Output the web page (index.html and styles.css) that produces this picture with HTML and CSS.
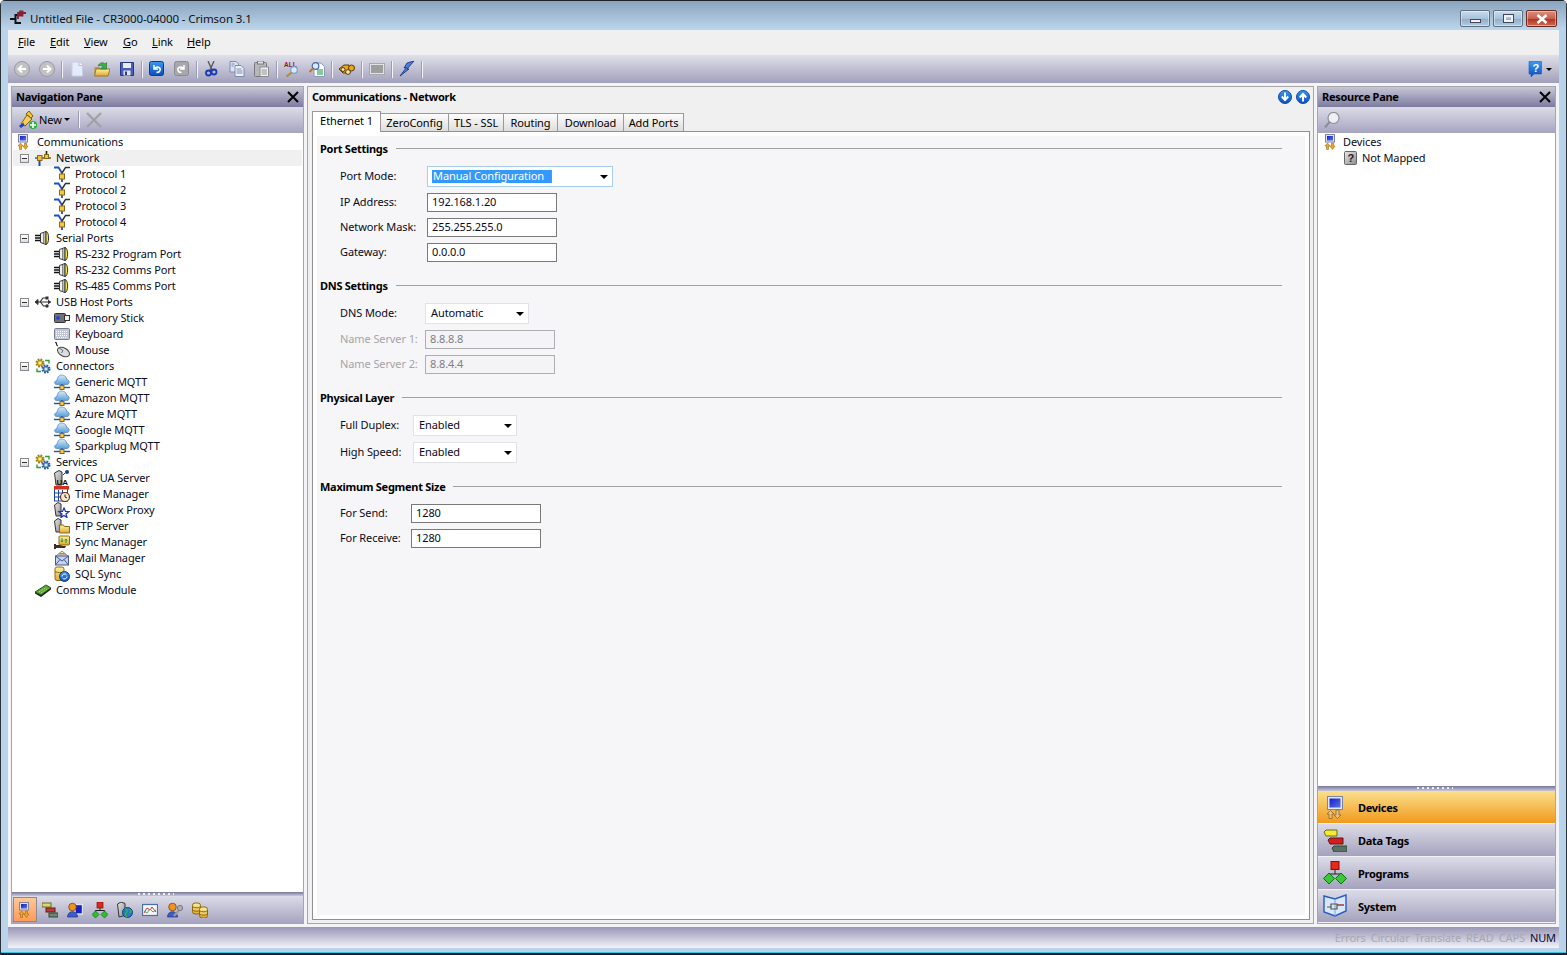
FILE: index.html
```html
<!DOCTYPE html>
<html lang="en">
<head>
<meta charset="utf-8">
<title>Untitled File - CR3000-04000 - Crimson 3.1</title>
<link rel="stylesheet" href="styles.css">
</head>
<body>
<svg class="sprite" xmlns="http://www.w3.org/2000/svg">
  <defs>
    <linearGradient id="gBlue" x1="0" y1="0" x2="0" y2="1"><stop offset="0" stop-color="#3a9af0"/><stop offset="1" stop-color="#0a4cc0"/></linearGradient>
    <linearGradient id="gGray" x1="0" y1="0" x2="1" y2="1"><stop offset="0" stop-color="#e8e8e8"/><stop offset="1" stop-color="#8c8c8c"/></linearGradient>
    <linearGradient id="gYel" x1="0" y1="0" x2="0" y2="1"><stop offset="0" stop-color="#fff0a0"/><stop offset="1" stop-color="#e0a830"/></linearGradient>
    <linearGradient id="gCloud" x1="0" y1="0" x2="0" y2="1"><stop offset="0" stop-color="#d8ecfa"/><stop offset="1" stop-color="#5aa0d8"/></linearGradient>
    <linearGradient id="gScreen" x1="0" y1="0" x2="1" y2="1"><stop offset="0" stop-color="#1420c8"/><stop offset="1" stop-color="#5a70e8"/></linearGradient>
  </defs>
  <symbol id="logo" viewBox="0 0 16 16"><path d="M0 9h5M11 5H5.500v8H11" fill="none" stroke="#111" stroke-width="2"/><path d="M8 9V3h2M10 1.500h2.500v4H10zM12.500 3H16" fill="#8c2030" stroke="#8c2030" stroke-width="1.800"/></symbol>
  <symbol id="comm" viewBox="0 0 16 16"><rect x="1.500" y=".5" width="9" height="7.500" fill="#dfe3f0" stroke="#7d84a0"/><rect x="3" y="2" width="6" height="4.500" fill="url(#gScreen)"/><path d="M3.500 9 1 12h1.500v3.500h2V12H6z" fill="#f2a81e" stroke="#8a5a10" stroke-width=".5"/><path d="M8.500 15.500 11 12H9.500V9h-2v3H6z" fill="#f2a81e" stroke="#8a5a10" stroke-width=".5"/></symbol>
  <symbol id="net" viewBox="0 0 16 16"><path d="M4.500 9v7" stroke="#1a50c0" stroke-width="2" fill="none"/><path d="M0 8h16" stroke="#333" stroke-width="1.200"/><path d="M11.500 1v6" stroke="#222" stroke-width="1.600"/><rect x="2.500" y="5.500" width="4.500" height="5" fill="#f0c040" stroke="#8a6a10"/><rect x="9.500" y="4.500" width="4" height="4" fill="#f0c040" stroke="#8a6a10"/></symbol>
  <symbol id="proto" viewBox="0 0 16 16"><path d="M0 1.500h4.500L8 7" fill="none" stroke="#1a50c0" stroke-width="1.800"/><path d="M16 1.500h-4.500L8 7" fill="none" stroke="#333" stroke-width="1.400"/><path d="M8 7v9" stroke="#1a50c0" stroke-width="1.800"/><rect x="5.500" y="8" width="5" height="5" fill="#f3c84a" stroke="#8a6a10"/></symbol>
  <symbol id="serial" viewBox="0 0 16 16"><path d="M0 5.500h6M0 8h6M0 10.500h6" stroke="#111" stroke-width="1.400"/><path d="M5.500 3.500 11 1.500v13l-5.500-2z" fill="#f0f0f0" stroke="#333"/><rect x="8" y="3" width="1.500" height="10" fill="#888"/><path d="M11 1.500c3.500.5 3.500 12.500 0 13z" fill="#f4ec20" stroke="#333"/></symbol>
  <symbol id="usb" viewBox="0 0 16 16"><path d="M0 8 3 5.500v5zM3 8h13" fill="#333" stroke="#333"/><path d="M5 8l3-4h3M5.500 8l3 4h2.500" fill="none" stroke="#333" stroke-width="1.200"/><rect x="10.500" y="2.500" width="3" height="3" fill="#333"/><circle cx="12" cy="12" r="1.700" fill="#333"/><path d="M13 5.500l3 2.500-3 2.500z" fill="#333"/></symbol>
  <symbol id="stick" viewBox="0 0 16 16"><rect x=".5" y="3.500" width="11" height="9" rx="1" fill="#6f7078" stroke="#333"/><circle cx="4" cy="8" r="1.800" fill="#1a40e0"/><rect x="10.500" y="5.500" width="5" height="5" fill="#eee" stroke="#333"/></symbol>
  <symbol id="kbd" viewBox="0 0 16 16"><rect x=".5" y="2.500" width="15" height="11" rx="1" fill="#c0c6d6" stroke="#7a7f90"/><path d="M2 5.500h12M2 7.500h12M2 9.500h12M3 11.500h10" stroke="#fff" stroke-dasharray="1 1"/></symbol>
  <symbol id="mouse" viewBox="0 0 16 16"><path d="M1 0c3 1 0 3 3 4" fill="none" stroke="#222" stroke-width="1.200"/><ellipse cx="9.500" cy="10" rx="6.500" ry="4" transform="rotate(30 9.500 10)" fill="#dcdce4" stroke="#444"/><path d="M5 6 9 8.500 7.500 11" fill="none" stroke="#666"/></symbol>
  <symbol id="gears" viewBox="0 0 16 16"><circle cx="5" cy="5" r="3.300" fill="#e8b838" stroke="#9a7a18" stroke-width="2.400" stroke-dasharray="1.600 1"/><circle cx="5" cy="5" r="1.300" fill="#fff0b0"/><circle cx="11" cy="11" r="3.300" fill="#6aa0d8" stroke="#2a5a9a" stroke-width="2.400" stroke-dasharray="1.600 1"/><circle cx="11" cy="11" r="1.300" fill="#dcecfa"/><path d="M10 2.500h4v3" fill="none" stroke="#2aa040" stroke-width="1.400"/><path d="M6 13.500H2v-3" fill="none" stroke="#2aa040" stroke-width="1.400"/></symbol>
  <symbol id="cloud" viewBox="0 0 16 16"><path d="M2.500 10.500C0 10.500 0 6.500 3 6.500 3.500 1.500 7 0 9.500 1.500 11.500 2 12.500 3.500 12.500 5.500 16 5.500 16 10.500 13 10.500z" fill="url(#gCloud)" stroke="#5a8ac0" stroke-width=".8"/><path d="M0 13.500h16" stroke="#1a50c0" stroke-width="1.400"/><path d="M8 10v6" stroke="#1a50c0" stroke-width="1.400"/><rect x="6" y="11.500" width="4" height="4" fill="#f3c84a" stroke="#8a6a10"/></symbol>
  <symbol id="time" viewBox="0 0 16 16"><rect x=".5" y="1.500" width="13" height="13.500" fill="#fff" stroke="#1a40a0"/><rect x="0" y="0" width="15" height="3.500" fill="#d03020"/><path d="M1 7h12M1 11h12M4.500 4v11M8.500 4v11" stroke="#1a40a0"/><circle cx="11" cy="11" r="4.500" fill="#f4e8d0" stroke="#703018" stroke-width="1.200"/><path d="M11 8.500V11l2 1" fill="none" stroke="#222"/></symbol>
  <symbol id="worx" viewBox="0 0 16 16"><path d="M.5 3 4 .5 7 2v12H2z" fill="url(#gGray)" stroke="#333"/><path d="M10 6l1.500 3.500H15l-3 2.500 1 3.500-3-2-3 2 1-3.500-3-2.500h3.500z" fill="#fff" stroke="#1a30d0" stroke-width="1.200"/></symbol>
  <symbol id="ftp" viewBox="0 0 16 16"><path d="M.5 3 4 .5 7 2v12H2z" fill="url(#gGray)" stroke="#333"/><path d="M5.500 7h4l1 1.500h5v6.500h-10z" fill="url(#gYel)" stroke="#8a6a10"/></symbol>
  <symbol id="sync" viewBox="0 0 16 16"><rect x="5" y="2" width="10.500" height="9" rx="1" fill="url(#gYel)" stroke="#8a6a10"/><path d="M8 4v4M7 6.500 8 8l1-1.500M12 9V5M11 6.500 12 5l1 1.500" fill="none" stroke="#1f9a30"/><path d="M0 10h2v5H0zM2 11h4l3 1h3l-1 2H2z" fill="#3a3028"/></symbol>
  <symbol id="mail" viewBox="0 0 16 16"><path d="M2 6 8 1l6 5v2H2z" fill="#f6e6b0" stroke="#8a8a9a"/><rect x="1.500" y="6" width="13" height="9" fill="#c4d4ee" stroke="#4a5a8a"/><path d="M1.500 6 8 11l6.500-5M1.500 15 6 9.500M14.500 15 10 9.500" fill="none" stroke="#4a5a8a"/><path d="M4 5h8M5 3.500h6" stroke="#8a8a9a"/></symbol>
  <symbol id="sql" viewBox="0 0 16 16"><rect x="1" y="1" width="9" height="13.500" rx="2" fill="url(#gYel)" stroke="#8a6a10"/><path d="M1 5.500c3 1.500 6 1.500 9 0" fill="none" stroke="#8a6a10"/><circle cx="10.500" cy="10.500" r="5" fill="url(#gBlue)" stroke="#12408a"/><path d="M8 10.500a2.500 2.500 0 0 1 4.500-1.500M13 10.500a2.500 2.500 0 0 1-4.500 1.500" fill="none" stroke="#fff"/></symbol>
  <symbol id="card" viewBox="0 0 16 16"><path d="M0 10 11 3l5 3-10 7z" fill="#5aa838" stroke="#2a5a18"/><path d="M0 10v1.500L6 15l10-7.500V6L6 13z" fill="#222"/><path d="M4 10l7-4.500M6 11l6-4" stroke="#c8e880" stroke-dasharray="1 1"/></symbol>

  <symbol id="back" viewBox="0 0 16 16"><circle cx="8" cy="8" r="7.500" fill="#c2c2c4" stroke="#9a9a9e"/><path d="M12 8H5M8 4.500 4.500 8 8 11.500" fill="none" stroke="#fff" stroke-width="2"/></symbol>
  <symbol id="fwd" viewBox="0 0 16 16"><circle cx="8" cy="8" r="7.500" fill="#c2c2c4" stroke="#9a9a9e"/><path d="M4 8h7M8 4.500 11.500 8 8 11.500" fill="none" stroke="#fff" stroke-width="2"/></symbol>
  <symbol id="new" viewBox="0 0 16 16"><path d="M3 1h7l3.500 3.500V15H3z" fill="#e4ecfa" stroke="#c4cee4"/><path d="M10 1v3.500h3.500" fill="#fff" stroke="#b0bcd8"/></symbol>
  <symbol id="open" viewBox="0 0 16 16"><path d="M.5 6h5l1 1.500h7v7.500H.5z" fill="#b89838"/><path d="M.5 15 2 8h14l-2 7z" fill="url(#gYel)" stroke="#a07c18"/><path d="M4 5C6 1 9 1 11 3L12.500 1.500v6.500H6.500L9 5.500C7.500 4.500 6 4 4 5z" fill="#3cb048" stroke="#1a7028" stroke-width=".6"/></symbol>
  <symbol id="save" viewBox="0 0 16 16"><path d="M1.500 1.500h13v13h-13z" fill="#4a5eb4" stroke="#26348a"/><rect x="4" y="2" width="8" height="5" fill="#e8ecf8"/><rect x="4.500" y="9.500" width="7" height="5" fill="#e0e4f4"/><rect x="6" y="10.500" width="2" height="3.500" fill="#2a3a90"/></symbol>
  <symbol id="undo" viewBox="0 0 16 16"><rect x=".5" y=".5" width="14" height="14" rx="2" fill="url(#gBlue)" stroke="#0a3a90"/><path d="M5 4v4h4M5 8C8 4.500 12 6.500 11 9.500 10.500 11 9 11.500 7.500 11.500" fill="none" stroke="#fff" stroke-width="1.500"/></symbol>
  <symbol id="redo" viewBox="0 0 16 16"><rect x=".5" y=".5" width="14" height="14" rx="2" fill="#a8a8aa" stroke="#8a8a8e"/><path d="M10 4v4H6M10 8C7 4.500 3 6.500 4 9.500 4.500 11 6 11.500 7.500 11.500" fill="none" stroke="#fff" stroke-width="1.500"/></symbol>
  <symbol id="cut" viewBox="0 0 16 16"><path d="M4 0l4 9M10 0 6 9" stroke="#555" stroke-width="1.300"/><circle cx="4.500" cy="12" r="2.500" fill="none" stroke="#1a3ab0" stroke-width="1.800"/><circle cx="10" cy="11" r="2.500" fill="none" stroke="#1a3ab0" stroke-width="1.800"/></symbol>
  <symbol id="copy" viewBox="0 0 16 16"><path d="M1 .5h6l2.500 2.500v8H1z" fill="#dfe4f2" stroke="#7a8ab0"/><path d="M6 4.500h6l3 3v8H6z" fill="#eef1fa" stroke="#7a8ab0"/><path d="M7.500 8h5M7.500 10h6M7.500 12h6M2.500 3h3M2.500 5h2" stroke="#7a8ab0"/></symbol>
  <symbol id="paste" viewBox="0 0 16 16"><rect x=".5" y="1.500" width="12" height="14" rx="1" fill="#b8b8ba" stroke="#77777c"/><rect x="3.500" y="0" width="6" height="3" fill="#e6e6e6" stroke="#77777c"/><path d="M6 6h8.500v9.500H6z" fill="#f2f2f2" stroke="#8a8a8e"/><path d="M7.500 9h5.500M7.500 11h5.500M7.500 13h5.500" stroke="#909094"/></symbol>
  <symbol id="find" viewBox="0 0 16 16"><path d="M5 2h7l3.500 3.500V15.500H5z" fill="#f6f8fc" stroke="#8a9ab8"/><path d="M8 9h6M8 11h6M8 13h6" stroke="#1f9a30" stroke-width="1.200"/><circle cx="6.500" cy="5" r="3.300" fill="#d6ecfa" stroke="#4a68a8" stroke-width="1.200"/><path d="M4 7.500 .5 11" stroke="#b87828" stroke-width="2"/></symbol>
  <symbol id="binoc" viewBox="0 0 16 16"><path d="M0 8 5 4h5l1 8H4z" fill="#e8a818" stroke="#5a3a08"/><circle cx="4" cy="8.500" r="2" fill="#f6e6a0" stroke="#5a3a08"/><circle cx="12.500" cy="7" r="3" fill="#e8a818" stroke="#5a3a08"/><circle cx="9" cy="11" r="2.400" fill="#f6e6a0" stroke="#5a3a08"/></symbol>
  <symbol id="screen" viewBox="0 0 16 16"><rect x=".5" y="2.500" width="15" height="11" fill="#e2e2e4" stroke="#a8a8ac"/><rect x="2" y="4" width="12" height="8" fill="#9e9e9e"/></symbol>
  <symbol id="bolt" viewBox="0 0 16 16"><path d="M15 0 8 2 5 7 7.500 6.500 1 15 10 8 8 8z" fill="#4a80d8" stroke="#0e2a80" stroke-width=".8"/></symbol>
  <symbol id="plug" viewBox="0 0 20 20"><path d="M11 1 15 6 13 8 8 4z" fill="#f2c438" stroke="#80600c"/><path d="M3 14 9 5 14 9 7 16z" fill="#f2d060" stroke="#80600c"/><path d="M6 14c-2 1-3 2-4 3" stroke="#2040c0" stroke-width="3"/><circle cx="15" cy="15" r="4" fill="#2db040"/><path d="M15 12v6M12 15h6" stroke="#fff" stroke-width="1.600"/></symbol>
  <symbol id="delx" viewBox="0 0 16 16"><path d="M1 1l14 14M15 1 1 15" stroke="#a0a0a4" stroke-width="2.200"/></symbol>
  <symbol id="mag" viewBox="0 0 16 16"><circle cx="9.500" cy="6" r="5.500" fill="#eeeef4" stroke="#8c8c94" stroke-width="1.200"/><path d="M5.500 10 1 15.500" stroke="#8c8c94" stroke-width="2"/></symbol>
  <symbol id="down" viewBox="0 0 14 14"><circle cx="7" cy="7" r="6.500" fill="url(#gBlue)" stroke="#0d4aa8"/><path d="M7 2.500v7M3.800 6.500 7 10l3.200-3.500" fill="none" stroke="#fff" stroke-width="2"/></symbol>
  <symbol id="up" viewBox="0 0 14 14"><circle cx="7" cy="7" r="6.500" fill="url(#gBlue)" stroke="#0d4aa8"/><path d="M7 11.500v-7M3.800 7.500 7 4l3.200 3.500" fill="none" stroke="#fff" stroke-width="2"/></symbol>

  <symbol id="tags" viewBox="0 0 16 16"><rect x="0" y="1" width="9" height="4" fill="#d8d870" stroke="#6a6a20"/><rect x="4" y="6" width="9" height="4" fill="#c03838" stroke="#6a1818"/><rect x="7" y="11" width="9" height="4" fill="#6a8a70" stroke="#2a4a30"/></symbol>
  <symbol id="user" viewBox="0 0 16 16"><rect x="8" y="2.500" width="7.500" height="9.500" fill="#1420c8" stroke="#dfe3f0" stroke-width="1.400"/><circle cx="5.500" cy="5" r="3.800" fill="#f0921e" stroke="#6a3a10" stroke-width=".7"/><path d="M.5 15c0-7 10-7 10 0z" fill="#3a60c8" stroke="#1c3080" stroke-width=".7"/></symbol>
  <symbol id="flow" viewBox="0 0 16 16"><path d="M8 6v3M3.500 11V8.500h9V11" fill="none" stroke="#222"/><rect x="5" y="0" width="6" height="6" fill="#e02818" stroke="#801008" stroke-width=".7"/><path d="M3.500 9 7 12.500 3.500 16 0 12.500zM12.500 9 16 12.500 12.500 16 9 12.500z" fill="#2ec030" stroke="#0a7010" stroke-width=".7"/></symbol>
  <symbol id="globe" viewBox="0 0 16 16"><path d="M.5 2 4 0l4 1.500v12L2 15z" fill="url(#gGray)" stroke="#333"/><circle cx="10.500" cy="10.500" r="5" fill="#2a78c8" stroke="#124080"/><path d="M8 7c2 0 3 2 1.500 3.500S8 14 10 15M12 7l2 2-1.500 2" fill="none" stroke="#38b040" stroke-width="1.500"/></symbol>
  <symbol id="chart" viewBox="0 0 16 16"><rect x=".5" y="2.500" width="15" height="11" fill="#f4f6fa" stroke="#4a70a8" stroke-width="1.200"/><path d="M2 11 5 6l3 2 2-3 4 5" fill="none" stroke="#e03030"/><path d="M2 9l3 2 3-4 3 3 3-2" fill="none" stroke="#40b040"/></symbol>
  <symbol id="tool" viewBox="0 0 16 16"><circle cx="5.500" cy="5" r="3.800" fill="#f0921e" stroke="#6a3a10" stroke-width=".7"/><path d="M.5 15c0-7 10-7 10 0z" fill="#3a60c8" stroke="#1c3080" stroke-width=".7"/><path d="M7 14 13 7" stroke="#9a9aa0" stroke-width="2.400"/><circle cx="13" cy="6" r="2.600" fill="#b0b0b6" stroke="#77777c"/></symbol>
  <symbol id="coins" viewBox="0 0 16 16"><rect x=".5" y="1" width="8" height="11" rx="2.500" fill="url(#gYel)" stroke="#8a6a10"/><rect x="7.500" y="5" width="8" height="11" rx="2.500" fill="url(#gYel)" stroke="#8a6a10"/><path d="M1 5c2 1 5 1 7 0M1 8.500c2 1 5 1 7 0M8 9c2 1 5 1 7 0M8 12.500c2 1 5 1 7 0" fill="none" stroke="#8a6a10"/></symbol>

  <symbol id="b-dev" viewBox="0 0 24 24"><rect x="4.500" y="1.500" width="15" height="13" fill="#e4e8f4" stroke="#7d84a0"/><rect x="6.500" y="3.500" width="11" height="9" fill="url(#gScreen)"/><path d="M7.500 15.500 4 19h2v4.500h3V19h2z" fill="#e8c080" stroke="#806030" stroke-width=".7"/><path d="M14.500 23.500 18 20h-2v-5h-3v5h-2z" fill="#e8c080" stroke="#806030" stroke-width=".7"/></symbol>
  <symbol id="b-tag" viewBox="0 0 24 24"><path d="M1 4l2-2h11v6H3z" fill="#f4ea30" stroke="#6a6a20"/><path d="M5 12l2-2h13v6H7z" fill="#d02020" stroke="#6a1010"/><path d="M9 20l2-2h13v6H11z" fill="#5a7060" stroke="#2a4a30"/></symbol>
  <symbol id="b-flow" viewBox="0 0 24 24"><path d="M12 9v4M5.500 17v-4h13v4" fill="none" stroke="#222"/><rect x="8" y="0.500" width="8" height="8" fill="#e8281a" stroke="#801008"/><path d="M6 12 11.500 17.500 6 23 .5 17.500zM18 12 23.500 17.500 18 23 12.500 17.500z" fill="#38c838" stroke="#0a7010"/></symbol>
  <symbol id="b-sys" viewBox="0 0 24 24"><path d="M1 2 12 5 23 1v16l-11 5L1 18z" fill="#d8e8fa" stroke="#2a5ac0" stroke-width="1.400"/><path d="M12 5v17" stroke="#7aa0d8"/><path d="M4 13h4v-3h6v5H8v-2M14 11h7" fill="none" stroke="#555" stroke-width="1.200"/><path d="M14 11h7" stroke="#c03030"/></symbol>
</svg>

<div class="window">
  <header class="titlebar">
    <svg class="ic"><use href="#logo"/></svg>
    <span class="title-text">Untitled File - CR3000-04000 - Crimson 3.1</span>
    <div class="winbtns">
      <div class="winbtn"><span class="glyph-min"></span></div>
      <div class="winbtn"><span class="glyph-max"></span></div>
      <div class="winbtn winbtn-close"><svg class="glyph-x" viewBox="0 0 14 10"><path d="M2.500 1 11.500 9M11.500 1 2.500 9" stroke="#fff" stroke-width="2.600"/></svg></div>
    </div>
  </header>

  <div class="client">
    <nav class="menubar">
      <span class="menu-item m-file"><u>F</u>ile</span>
      <span class="menu-item m-edit"><u>E</u>dit</span>
      <span class="menu-item m-view"><u>V</u>iew</span>
      <span class="menu-item m-go"><u>G</u>o</span>
      <span class="menu-item m-link"><u>L</u>ink</span>
      <span class="menu-item"><u>H</u>elp</span>
    </nav>

    <div class="toolbar">
      <span class="tb"><svg class="ic"><use href="#back"/></svg></span>
      <span class="tb"><svg class="ic"><use href="#fwd"/></svg></span>
      <span class="sep"></span>
      <span class="tb"><svg class="ic"><use href="#new"/></svg></span>
      <span class="tb"><svg class="ic"><use href="#open"/></svg></span>
      <span class="tb"><svg class="ic"><use href="#save"/></svg></span>
      <span class="sep"></span>
      <span class="tb"><svg class="ic"><use href="#undo"/></svg></span>
      <span class="tb"><svg class="ic"><use href="#redo"/></svg></span>
      <span class="sep"></span>
      <span class="tb"><svg class="ic"><use href="#cut"/></svg></span>
      <span class="tb"><svg class="ic"><use href="#copy"/></svg></span>
      <span class="tb"><svg class="ic"><use href="#paste"/></svg></span>
      <span class="sep"></span>
      <span class="tb"><svg class="ic" viewBox="0 0 16 16"><text x="0" y="6" class="icon-text allw">ALL</text><circle cx="10" cy="9" r="3.300" fill="#d6ecfa" stroke="#7aa0c8" stroke-width="1.200"/><path d="M7.500 11.500 2.500 15.500" stroke="#b88a28" stroke-width="2"/></svg></span>
      <span class="tb"><svg class="ic"><use href="#find"/></svg></span>
      <span class="sep"></span>
      <span class="tb"><svg class="ic"><use href="#binoc"/></svg></span>
      <span class="sep"></span>
      <span class="tb"><svg class="ic"><use href="#screen"/></svg></span>
      <span class="sep"></span>
      <span class="tb"><svg class="ic"><use href="#bolt"/></svg></span>
      <span class="sep"></span>
      <span class="tb-help"><svg class="ic" viewBox="0 0 16 16"><path d="M1 .5h12.500v12.500H6L3 16v-3H1z" fill="url(#gBlue)" stroke="#1a5ac0" stroke-width=".6"/><text x="4.500" y="11" class="icon-text hm">?</text></svg><span class="caret caret-small"></span></span>
    </div>

    <main class="workspace">
      <aside class="pane pane-nav">
        <div class="pane-head"><span>Navigation Pane</span><svg class="closex" viewBox="0 0 12 12"><path d="M1 1l10 10M11 1 1 11" stroke="#000" stroke-width="2"/></svg></div>
        <div class="pane-tools">
          <svg class="ic-plug"><use href="#plug"/></svg>
          <span class="new-label">New</span><span class="caret caret-small"></span>
          <span class="sep sep-tools"></span>
          <svg class="ic"><use href="#delx"/></svg>
        </div>
        <div class="tree">
          <div class="row l0"><svg class="ic"><use href="#comm"/></svg><span class="lab">Communications</span></div>
          <div class="row l1 selected"><span class="exp"></span><svg class="ic"><use href="#net"/></svg><span class="lab">Network</span></div>
          <div class="row l2"><svg class="ic"><use href="#proto"/></svg><span class="lab">Protocol 1</span></div>
          <div class="row l2"><svg class="ic"><use href="#proto"/></svg><span class="lab">Protocol 2</span></div>
          <div class="row l2"><svg class="ic"><use href="#proto"/></svg><span class="lab">Protocol 3</span></div>
          <div class="row l2"><svg class="ic"><use href="#proto"/></svg><span class="lab">Protocol 4</span></div>
          <div class="row l1"><span class="exp"></span><svg class="ic"><use href="#serial"/></svg><span class="lab">Serial Ports</span></div>
          <div class="row l2"><svg class="ic"><use href="#serial"/></svg><span class="lab">RS-232 Program Port</span></div>
          <div class="row l2"><svg class="ic"><use href="#serial"/></svg><span class="lab">RS-232 Comms Port</span></div>
          <div class="row l2"><svg class="ic"><use href="#serial"/></svg><span class="lab">RS-485 Comms Port</span></div>
          <div class="row l1"><span class="exp"></span><svg class="ic"><use href="#usb"/></svg><span class="lab">USB Host Ports</span></div>
          <div class="row l2"><svg class="ic"><use href="#stick"/></svg><span class="lab">Memory Stick</span></div>
          <div class="row l2"><svg class="ic"><use href="#kbd"/></svg><span class="lab">Keyboard</span></div>
          <div class="row l2"><svg class="ic"><use href="#mouse"/></svg><span class="lab">Mouse</span></div>
          <div class="row l1"><span class="exp"></span><svg class="ic"><use href="#gears"/></svg><span class="lab">Connectors</span></div>
          <div class="row l2"><svg class="ic"><use href="#cloud"/></svg><span class="lab">Generic MQTT</span></div>
          <div class="row l2"><svg class="ic"><use href="#cloud"/></svg><span class="lab">Amazon MQTT</span></div>
          <div class="row l2"><svg class="ic"><use href="#cloud"/></svg><span class="lab">Azure MQTT</span></div>
          <div class="row l2"><svg class="ic"><use href="#cloud"/></svg><span class="lab">Google MQTT</span></div>
          <div class="row l2"><svg class="ic"><use href="#cloud"/></svg><span class="lab">Sparkplug MQTT</span></div>
          <div class="row l1"><span class="exp"></span><svg class="ic"><use href="#gears"/></svg><span class="lab">Services</span></div>
          <div class="row l2"><svg class="ic" viewBox="0 0 16 16"><path d="M.5 3 5 .5 8 2v13H2z" fill="url(#gGray)" stroke="#333"/><text x="2.500" y="15" class="icon-text ua">UA</text><circle cx="13" cy="2" r="2" fill="#1a4080"/><path d="M9 5l2-2" stroke="#1a4080"/></svg><span class="lab">OPC UA Server</span></div>
          <div class="row l2"><svg class="ic"><use href="#time"/></svg><span class="lab">Time Manager</span></div>
          <div class="row l2"><svg class="ic"><use href="#worx"/></svg><span class="lab">OPCWorx Proxy</span></div>
          <div class="row l2"><svg class="ic"><use href="#ftp"/></svg><span class="lab">FTP Server</span></div>
          <div class="row l2"><svg class="ic"><use href="#sync"/></svg><span class="lab">Sync Manager</span></div>
          <div class="row l2"><svg class="ic"><use href="#mail"/></svg><span class="lab">Mail Manager</span></div>
          <div class="row l2"><svg class="ic"><use href="#sql"/></svg><span class="lab">SQL Sync</span></div>
          <div class="row l1 noexp"><svg class="ic"><use href="#card"/></svg><span class="lab">Comms Module</span></div>
        </div>
        <div class="splitter"><span class="grip"></span></div>
        <div class="cat-bar">
          <span class="cat active"><svg class="ic"><use href="#comm"/></svg></span>
          <span class="cat"><svg class="ic"><use href="#tags"/></svg></span>
          <span class="cat"><svg class="ic"><use href="#user"/></svg></span>
          <span class="cat"><svg class="ic"><use href="#flow"/></svg></span>
          <span class="cat"><svg class="ic"><use href="#globe"/></svg></span>
          <span class="cat"><svg class="ic"><use href="#chart"/></svg></span>
          <span class="cat"><svg class="ic"><use href="#tool"/></svg></span>
          <span class="cat"><svg class="ic"><use href="#coins"/></svg></span>
        </div>
      </aside>

      <section class="pane pane-main">
        <div class="main-head">
          <span class="main-title">Communications - Network</span>
          <svg class="ic-nav"><use href="#down"/></svg>
          <svg class="ic-nav"><use href="#up"/></svg>
        </div>
        <div class="tabs">
          <span class="tab tab-active">Ethernet 1</span>
          <span class="tab t-zero">ZeroConfig</span>
          <span class="tab t-tls">TLS - SSL</span>
          <span class="tab t-rout">Routing</span>
          <span class="tab t-down">Download</span>
          <span class="tab t-add">Add Ports</span>
        </div>
        <div class="tab-panel">
          <div class="panel-inner">
            <div class="group g-port">
              <div class="group-title"><b>Port Settings</b><i class="rule"></i></div>
              <div class="frow frow-combo"><label>Port Mode:</label><div class="combo combo-focus combo-wide"><span class="sel">Manual Configuration</span><span class="caret"></span></div></div>
              <div class="frow"><label>IP Address:</label><div class="input">192.168.1.20</div></div>
              <div class="frow"><label>Network Mask:</label><div class="input">255.255.255.0</div></div>
              <div class="frow"><label>Gateway:</label><div class="input">0.0.0.0</div></div>
            </div>
            <div class="group g-dns">
              <div class="group-title"><b>DNS Settings</b><i class="rule"></i></div>
              <div class="frow frow-combo"><label>DNS Mode:</label><div class="combo">Automatic<span class="caret"></span></div></div>
              <div class="frow off"><label>Name Server 1:</label><div class="input">8.8.8.8</div></div>
              <div class="frow off"><label>Name Server 2:</label><div class="input">8.8.4.4</div></div>
            </div>
            <div class="group g-phys">
              <div class="group-title"><b>Physical Layer</b><i class="rule"></i></div>
              <div class="frow frow-combo"><label>Full Duplex:</label><div class="combo">Enabled<span class="caret"></span></div></div>
              <div class="frow frow-combo"><label>High Speed:</label><div class="combo">Enabled<span class="caret"></span></div></div>
            </div>
            <div class="group g-seg">
              <div class="group-title"><b>Maximum Segment Size</b><i class="rule"></i></div>
              <div class="frow"><label>For Send:</label><div class="input">1280</div></div>
              <div class="frow"><label>For Receive:</label><div class="input">1280</div></div>
            </div>
          </div>
        </div>
      </section>

      <aside class="pane pane-res">
        <div class="pane-head"><span>Resource Pane</span><svg class="closex" viewBox="0 0 12 12"><path d="M1 1l10 10M11 1 1 11" stroke="#000" stroke-width="2"/></svg></div>
        <div class="pane-tools pane-tools-res"><svg class="ic"><use href="#mag"/></svg></div>
        <div class="tree">
          <div class="row r0"><svg class="ic"><use href="#comm"/></svg><span class="lab">Devices</span></div>
          <div class="row r1"><svg class="ic" viewBox="0 0 16 16"><rect x="1.500" y="1.500" width="12" height="13" rx="1" fill="url(#gGray)" stroke="#666"/><text x="4.500" y="12" class="icon-text qm">?</text></svg><span class="lab">Not Mapped</span></div>
        </div>
        <div class="splitter"><span class="grip"></span></div>
        <div class="big big-active"><svg class="ic-big"><use href="#b-dev"/></svg><span>Devices</span></div>
        <div class="big"><svg class="ic-big"><use href="#b-tag"/></svg><span>Data Tags</span></div>
        <div class="big"><svg class="ic-big"><use href="#b-flow"/></svg><span>Programs</span></div>
        <div class="big"><svg class="ic-big"><use href="#b-sys"/></svg><span>System</span></div>
      </aside>
    </main>

    <footer class="status">
      <span>Errors</span><span>Circular</span><span>Translate</span><span>READ</span><span>CAPS</span><span class="on">NUM</span>
    </footer>
  </div>
</div>
</body>
</html>
```
FILE: styles.css
```css
* { box-sizing: border-box; }
html, body { margin: 0; padding: 0; }
body { width: 1567px; height: 955px; overflow: hidden; font-family: "Noto Sans", "DejaVu Sans", sans-serif; font-size: 11px; letter-spacing: -0.1px; color: #000; background: #fff; }
.sprite { position: absolute; width: 0; height: 0; }
.icon-text { font-family: "Liberation Sans", sans-serif; font-weight: 700; letter-spacing: 0; }
.ua { font-size: 8px; fill: #111; }
.qm { font-size: 11px; fill: #222; }
.hm { font-size: 11px; fill: #fff; }
.allw { font-size: 6.5px; fill: #a01020; }
.ic { width: 16px; height: 16px; flex: none; display: block; }

.window { width: 1567px; height: 955px; display: flex; flex-direction: column; padding-bottom: 5px; background: #b9d3ea; border: 1px solid #2a3238; border-top-color: #1c2228; border-bottom: 2px solid #1a2024; border-radius: 5px 5px 0 0; box-shadow: inset 0 -1px 0 #40c0e0; }
.titlebar { height: 29px; flex: none; display: flex; align-items: center; padding: 5px 9px 0 9px; background: linear-gradient(#8aa4bd, #bcd6ed); }
.title-text { margin-left: 4px; font-size: 11.5px; letter-spacing: -0.1px; color: #111; }
.winbtns { margin-left: auto; display: flex; gap: 3px; align-self: flex-start; margin-top: 4px; }
.winbtn { width: 30px; height: 17px; border: 1px solid #5f6f80; border-radius: 2px; background: linear-gradient(#c8dcee 0, #a8c2da 50%, #90acc6 51%, #b0cce2 100%); display: flex; align-items: center; justify-content: center; box-shadow: inset 0 0 0 1px rgba(255,255,255,.4); }
.winbtn-close { width: 31px; background: linear-gradient(#dc8f80 0, #c8604e 50%, #b03020 51%, #d06a50 100%); border-color: #6a2a20; }
.glyph-min { width: 11px; height: 4px; margin-top: 5px; background: #f0f4f8; border: 1px solid #445; }
.glyph-max { width: 11px; height: 9px; background: transparent; border: 1px solid #445; box-shadow: inset 0 0 0 2px #f0f4f8; }
.glyph-x { width: 14px; height: 10px; }

.client { flex: 1; margin: 0 7px; display: flex; flex-direction: column; min-height: 0; background: #f1f1f1; }
.menubar { height: 25px; flex: none; display: flex; align-items: center; padding: 0 0 2px 10px; background: #f0f0f0; }
.m-file { width: 32px; } .m-edit { width: 34px; } .m-view { width: 39px; } .m-go { width: 29px; } .m-link { width: 35px; }

.toolbar { height: 28px; flex: none; display: flex; align-items: center; padding-left: 2px; padding-right: 7px; background: linear-gradient(#e0e0ea, #a1a0bc); }
.tb { width: 25px; padding-left: 4px; flex: none; }
.sep { width: 1px; height: 17px; margin: 0 2px; flex: none; background: #f4f4f8; box-shadow: -1px 0 0 #9a9ab2; }
.tb-help { margin-left: auto; display: flex; align-items: center; gap: 2px; }
.caret { display: inline-block; width: 0; height: 0; border-left: 4px solid transparent; border-right: 4px solid transparent; border-top: 4px solid #000; }
.caret-small { border-left-width: 3px; border-right-width: 3px; border-top-width: 3px; }

.workspace { flex: 1; min-height: 0; display: flex; gap: 3px; padding: 3px; background: #f4f4f6; }
.pane { display: flex; flex-direction: column; border: 1px solid #a6a6a6; min-height: 0; }
.pane-nav { width: 293px; background: #fff; }
.pane-main { width: 1007px; background: #f0f0f0; }
.pane-res { width: 239px; background: #fff; }
.pane-head { height: 20px; flex: none; display: flex; align-items: center; justify-content: space-between; padding: 0 4px 0 4px; font-weight: 700; letter-spacing: -0.28px; background: linear-gradient(#c6c6d8, #7c7b9e); }
.pane-head span { margin-top: -2px; }
.closex { width: 12px; height: 12px; }
.pane-tools { height: 27px; flex: none; display: flex; align-items: center; padding: 0 0 1px 6px; background: linear-gradient(#dcdce8, #a6a4c0); border-bottom: 1px solid #fff; }
.ic-plug { width: 20px; height: 20px; flex: none; }
.new-label { margin: 0 2px 0 1px; }
.sep-tools { margin: 0 6px 0 9px; }

.tree { flex: 1; min-height: 0; background: #fff; }
.row { height: 16px; display: flex; align-items: center; white-space: nowrap; color: #0a0a20; }
.lab { display: block; margin-top: -2px; }
.l0 { padding-left: 5px; } .l0 .lab { margin-left: 4px; }
.l1 { padding-left: 8px; } .l1 .lab { margin-left: 5px; }
.l2 { padding-left: 42px; } .l2 .lab { margin-left: 5px; }
.noexp { padding-left: 23px; }
.selected { background: #f0f0f0; margin: 0 1px; padding-left: 7px; }
.exp { width: 9px; height: 9px; margin-right: 6px; flex: none; border: 1px solid #888; background: linear-gradient(#fff, #dde) ; position: relative; }
.exp::after { content: ""; position: absolute; left: 1px; top: 3px; width: 5px; height: 1px; background: #333; }
.r0 { padding-left: 6px; } .r0 .lab { margin-left: 3px; }
.r1 { padding-left: 25px; } .r1 .lab { margin-left: 3px; }

.splitter { height: 4px; flex: none; background: linear-gradient(#77769a, #c8c8d8); display: flex; justify-content: center; align-items: flex-start; padding: 1px 4px 0 0; }
.pane-res .splitter { height: 5px; }
.grip { width: 36px; height: 2px; background: repeating-linear-gradient(90deg, #f0f0f4 0 2px, transparent 2px 5px); }
.cat-bar { height: 27px; flex: none; display: flex; align-items: center; padding-left: 1px; background: linear-gradient(#dcdce8, #a6a4c0); }
.cat { width: 25px; height: 25px; padding: 5px 0 0 5px; flex: none; }
.cat.active { width: 24px; padding: 4px 0 0 4px; border: 1px solid #8a8a90; background: linear-gradient(#ffc898, #ff9a58); }

.main-head { height: 20px; flex: none; display: flex; align-items: center; padding-left: 4px; padding-right: 3px; gap: 4px; background: #f0f0f0; }
.main-title { font-weight: 700; letter-spacing: -0.28px; margin: -2px auto 0 0; }
.ic-nav { width: 14px; height: 14px; flex: none; }
.tabs { height: 25px; flex: none; display: flex; align-items: flex-end; padding-left: 4px; position: relative; z-index: 1; margin-bottom: -1px; }
.tab { height: 18px; margin: 0 0 1px -1px; text-align: center; line-height: 18px; border: 1px solid #9a9a9a; border-bottom: none; background: linear-gradient(#fdfdfd, #ddd); white-space: nowrap; }
.tab-active { width: 69px; height: 21px; margin: 0; line-height: 17px; background: #fff; position: relative; z-index: 2; }
.t-zero { width: 69px; } .t-tls { width: 56px; } .t-rout { width: 55px; } .t-down { width: 67px; } .t-add { width: 61px; }
.tab-panel { flex: 1; min-height: 0; margin: 0 3px 3px 4px; border: 1px solid #909090; background: #fff; padding: 4px; }
.panel-inner { height: 100%; background: #f6f6f9; padding: 6px 23px 0 3px; }
.group { margin-bottom: 17px; }
.group-title { height: 14px; display: flex; align-items: center; margin-bottom: 10px; letter-spacing: -0.28px; }
.group-title b { font-weight: 700; margin-top: -2px; }
.rule { flex: 1; height: 1px; margin: -2px 0 0 8px; background: #a0a0a0; }
.frow { display: flex; align-items: center; height: 19px; margin-bottom: 6px; padding-left: 20px; color: #0a0a20; }
.frow-combo { height: 21px; }
.frow label { flex: none; margin-top: -2px; }
.g-port label { width: 87px; } .g-dns label { width: 85px; } .g-phys label { width: 73px; } .g-seg label { width: 71px; }
.input { width: 130px; height: 19px; border: 1px solid #7a7a7a; background: #fff; padding-left: 4px; line-height: 15px; }
.off label { color: #a4a4a8; }
.off .input { border-color: #aeaeb2; background: #f4f4f6; color: #808088; }
.combo { width: 104px; height: 21px; display: flex; align-items: center; justify-content: space-between; padding: 0 4px 2px 5px; background: #fff; border: 1px solid #e2e2e6; }
.combo .caret { margin-top: 2px; }
.combo-wide { width: 186px; }
.combo-focus { border-color: #a8cdea; padding: 0 4px 0 4px; }
.combo-focus .caret { margin-top: 0; }
.sel { width: 120px; height: 13px; line-height: 12px; padding-left: 1px; background: #3399ff; color: #fff; border-right: 1px solid #e07820; white-space: nowrap; }

.big { height: 33px; flex: none; display: flex; align-items: center; padding-left: 5px; font-weight: 700; letter-spacing: -0.28px; background: linear-gradient(#dcdce8, #a4a2bd); border-bottom: 1px solid #f2f2f6; }
.big span { margin-left: 11px; }
.big-active { background: linear-gradient(#fbe08e, #f09a1c); }
.ic-big { width: 24px; height: 24px; flex: none; }

.status { height: 21px; flex: none; display: flex; align-items: center; justify-content: flex-end; gap: 5px; padding-right: 3px; color: #a8a8b0; background: linear-gradient(#9896b6, #f2f2f7); }
.status .on { color: #0a0a30; }
```
